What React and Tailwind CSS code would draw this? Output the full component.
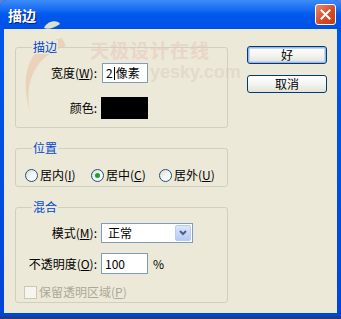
import React from "react";

const font = { fontFamily: '"Noto Sans CJK SC", "Noto Sans", sans-serif' };

function Group({ title, className, children }) {
  return (
    <div className={"relative rounded-[3px] border border-[#D0D0BF] " + className}>
      <span className="absolute left-[16px] top-[-8px] bg-[#ECE9D8] px-[1px] text-[12px] leading-[14px] text-[#0046D5]">
        {title}
      </span>
      {children}
    </div>
  );
}

function Radio({ checked, label, mn, w }) {
  return (
    <div className={"flex items-center gap-[2px] " + w}>
      <span className="flex h-[13px] w-[13px] items-center justify-center rounded-full border border-[#1C5180] bg-gradient-to-br from-[#DCDCD7] via-[#F4F4F2] to-white">
        {checked && <span className="h-[5px] w-[5px] rounded-full bg-[#21A121]" />}
      </span>
      <span className="text-[12px] leading-[14px] text-black">
        {label}(<u>{mn}</u>)
      </span>
    </div>
  );
}

function Btn({ children, def }) {
  return (
    <div
      className={
        "flex h-[18px] w-[80px] items-center justify-center rounded-[3px] border border-[#003C74] bg-gradient-to-b from-white via-[#F4F4F0] to-[#E3E3DB] text-[12px] leading-[14px] text-black " +
        (def ? "shadow-[inset_0_0_0_1px_#98B8EA,inset_0_0_0_2px_#C3D4F5]" : "")
      }
    >
      {children}
    </div>
  );
}

export default function App() {
  return (
    <div className="h-[319px] w-[341px] overflow-hidden bg-[#5A7EDC]" style={font}>
      <div className="flex h-[316px] flex-col rounded-t-[7px] bg-gradient-to-b from-[#0058EE] to-[#0046D8]">
        {/* title bar */}
        <div className="flex h-[29px] shrink-0 items-center justify-between rounded-t-[7px] bg-gradient-to-b from-[#3C8CF8] via-[#0058EE] to-[#0050E6] pl-[8px] pr-[5px]">
          <span className="text-[14px] font-bold leading-[16px] text-white [text-shadow:1px_1px_0_#0A1E6E]">
            描边
          </span>
          <div className="flex h-[21px] w-[21px] items-center justify-center rounded-[3px] border border-white bg-gradient-to-br from-[#E9876C] via-[#D94F2B] to-[#C23B17]">
            <svg width="11" height="11" viewBox="0 0 11 11">
              <path d="M1.5 1.5 L9.5 9.5 M9.5 1.5 L1.5 9.5" stroke="white" strokeWidth="2" strokeLinecap="square" />
            </svg>
          </div>
        </div>

        {/* body */}
        <div className="relative mx-[4px] mb-[3px] flex flex-1 bg-[#ECE9D8] pl-[11px] pt-[17px]">
          {/* watermark */}
          <div className="pointer-events-none absolute left-[-4px] top-[-29px] h-[319px] w-[341px]">
            <svg className="absolute left-0 top-0" width="120" height="130" viewBox="0 0 120 130">
              <path d="M62 38 C 32 44, 18 70, 30 112 C 24 80, 36 56, 66 46 Z" fill="#EBD2BA" />
              <path d="M44 28 C 48 20, 58 20, 60 24 C 54 28, 48 30, 44 28 Z" fill="#D9E2C6" />
            </svg>
            <span className="absolute left-[90px] top-[40px] text-[19px] font-bold leading-[19px] tracking-[1px] text-[#E9D6C8]">
              天极设计在线
            </span>
            <span
              className="absolute left-[150px] top-[63px] whitespace-nowrap text-[18px] font-bold leading-[19px] text-[#E3DACD]"
              style={{ fontFamily: '"Liberation Sans", Arial, sans-serif' }}
            >
              yesky.com
            </span>
          </div>

          {/* left column */}
          <div className="relative flex w-[213px] flex-col gap-[20px] pt-[1px]">
            <Group title="描边" className="flex h-[81px] flex-col gap-[14px] pt-[15px]">
              <div className="flex items-center">
                <div className="w-[81px] text-right text-[12px] leading-[14px] text-black">
                  宽度(<u>W</u>):
                </div>
                <div className="ml-[5px] flex h-[20px] w-[46px] items-center border border-[#7F9DB9] bg-white pl-[3px] text-[12px] leading-[14px] text-black">
                  2<span className="mx-[1px] inline-block h-[13px] w-[1px] bg-black" />像素
                </div>
              </div>
              <div className="flex items-center">
                <div className="w-[81px] text-right text-[12px] leading-[14px] text-black">颜色:</div>
                <div className="ml-[4px] h-[22px] w-[47px] bg-black" />
              </div>
            </Group>

            <Group title="位置" className="flex h-[39px] items-start pl-[9px] pt-[19px]">
              <Radio label="居内" mn="I" w="w-[66px]" />
              <Radio label="居中" mn="C" checked w="w-[68px]" />
              <Radio label="居外" mn="U" w="w-[60px]" />
            </Group>

            <Group title="混合" className="flex h-[96px] flex-col pt-[15px]">
              <div className="flex items-center">
                <div className="w-[81px] text-right text-[12px] leading-[14px] text-black">
                  模式(<u>M</u>):
                </div>
                <div className="ml-[4px] flex h-[20px] w-[92px] items-center justify-between border border-[#7F9DB9] bg-white pl-[6px] pr-[1px] text-[12px] leading-[14px] text-black">
                  <span>正常</span>
                  <span className="flex h-[16px] w-[16px] items-center justify-center rounded-[2px] border border-[#B9CBF3] bg-gradient-to-b from-[#DCE6FD] to-[#B6CAF6]">
                    <svg width="8" height="6" viewBox="0 0 8 6">
                      <path d="M1 1 L4 4 L7 1" stroke="#4D6185" strokeWidth="2" fill="none" />
                    </svg>
                  </span>
                </div>
              </div>
              <div className="mt-[10px] flex items-center">
                <div className="w-[81px] text-right text-[12px] leading-[14px] text-black">
                  不透明度(<u>O</u>):
                </div>
                <div className="ml-[4px] flex h-[21px] w-[47px] items-center border border-[#7F9DB9] bg-white pl-[3px] text-[12px] leading-[14px] text-black">
                  100
                </div>
                <span className="ml-[5px] text-[12px] leading-[14px] text-black">%</span>
              </div>
              <div className="mt-[11px] flex items-center gap-[2px] pl-[8px]">
                <span className="h-[13px] w-[13px] border border-[#CAC8BB] bg-[#F6F5F0]" />
                <span className="text-[12px] leading-[14px] text-[#ACA899]">
                  保留透明区域(<u>P</u>)
                </span>
              </div>
            </Group>
          </div>

          {/* buttons */}
          <div className="relative ml-[19px] flex flex-col gap-[11px]">
            <Btn def>好</Btn>
            <Btn>取消</Btn>
          </div>
        </div>
      </div>
      <div className="h-[3px] bg-[#1E3C8C]" />
    </div>
  );
}
